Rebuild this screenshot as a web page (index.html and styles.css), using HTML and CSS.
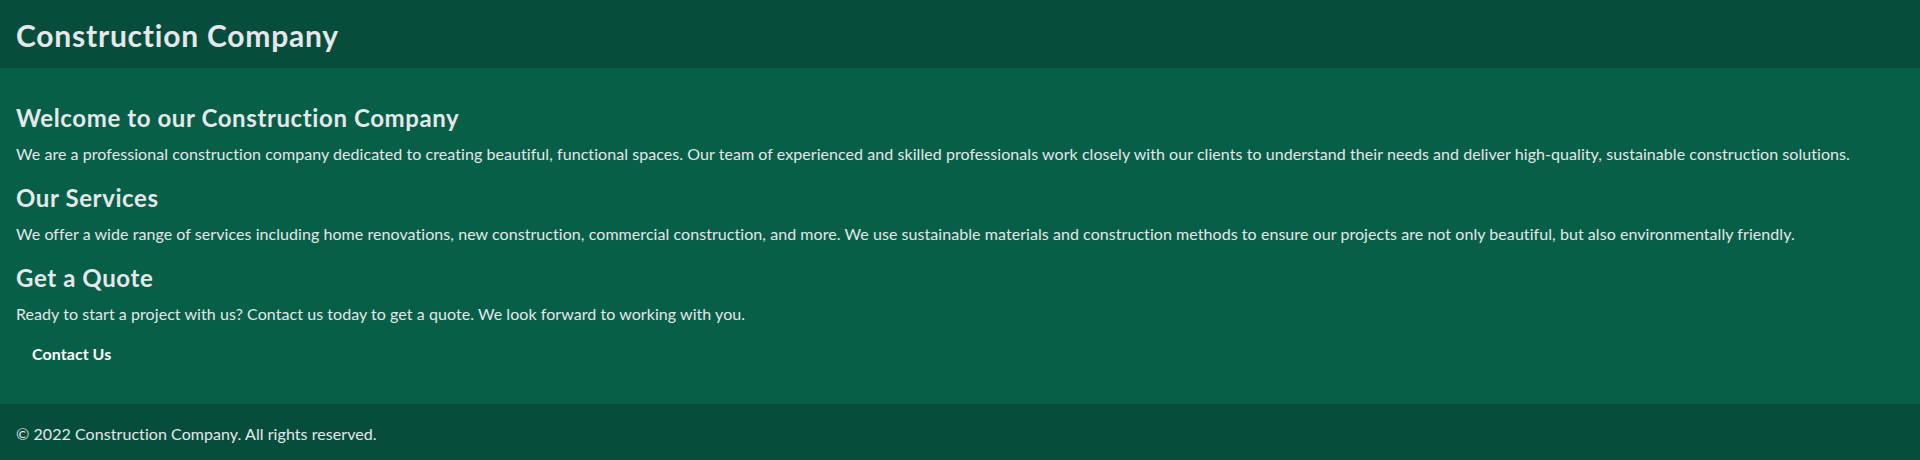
FILE: index.html
```html
<!DOCTYPE html>
<html lang="en">
<head>
<meta charset="utf-8">
<title>Construction Company</title>
<link rel="stylesheet" href="styles.css">
</head>
<body>
<header class="site-header">
  <h1 class="site-title">Construction Company</h1>
</header>
<main class="site-main">
  <section class="block">
    <h2 class="block-title">Welcome to our Construction Company</h2>
    <p class="block-text">We are a professional construction company dedicated to creating beautiful, functional spaces. Our team of experienced and skilled professionals work closely with our clients to understand their needs and deliver high-quality, sustainable construction solutions.</p>
  </section>
  <section class="block">
    <h2 class="block-title">Our Services</h2>
    <p class="block-text">We offer a wide range of services including home renovations, new construction, commercial construction, and more. We use sustainable materials and construction methods to ensure our projects are not only beautiful, but also environmentally friendly.</p>
  </section>
  <section class="block">
    <h2 class="block-title">Get a Quote</h2>
    <p class="block-text">Ready to start a project with us? Contact us today to get a quote. We look forward to working with you.</p>
    <button class="contact-btn" type="button">Contact Us</button>
  </section>
</main>
<footer class="site-footer">
  <p class="footer-text">© 2022 Construction Company. All rights reserved.</p>
</footer>
</body>
</html>
```
FILE: styles.css
```css
* { box-sizing: border-box; }
html, body { margin: 0; padding: 0; }
body {
  font-family: Lato, "Liberation Sans", sans-serif;
  font-size: 16px;
  line-height: 24px;
  letter-spacing: 0.06px;
  color: #e5e7eb;
  background: #065f46;
  height: 460px;
  display: flex;
  flex-direction: column;
}
.site-header {
  background: #064e3b;
  padding: 16px;
}
.site-title {
  margin: 0;
  padding-top: 3px;
  font-size: 30px;
  line-height: 33px;
  font-weight: 700;
  letter-spacing: 0.78px;
}
.site-main {
  flex: 1;
  background: #065f46;
  padding: 32px 16px;
  display: flex;
  flex-direction: column;
  gap: 16px;
}
.block {
  display: flex;
  flex-direction: column;
  align-items: flex-start;
}
.block-title {
  margin: 0 0 8px;
  padding-top: 4px;
  font-size: 24px;
  line-height: 28px;
  font-weight: 700;
  letter-spacing: 0.6px;
}
.block-text {
  margin: 0;
  padding-top: 3px;
  line-height: 21px;
}
.contact-btn {
  margin-top: 8px;
  padding: 11px 16px 8px;
  border: 0;
  background: transparent;
  color: #ffffff;
  font: inherit;
  font-weight: 700;
  line-height: 21px;
  letter-spacing: inherit;
  cursor: pointer;
}
.site-footer {
  background: #064e3b;
  padding: 16px;
}
.footer-text {
  margin: 0;
  padding-top: 3px;
  line-height: 21px;
}
```
